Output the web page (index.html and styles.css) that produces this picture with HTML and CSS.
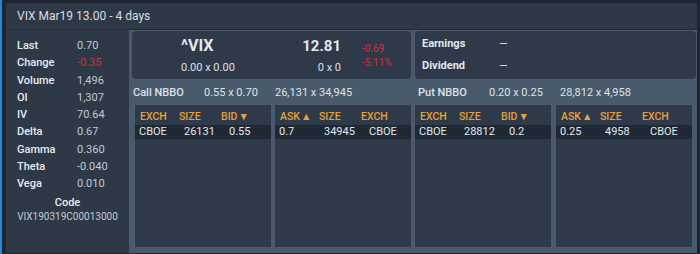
FILE: index.html
```html
<!DOCTYPE html>
<html lang="en">
<head>
  <meta charset="UTF-8">
  <title>VIX Mar19 13.00 - 4 days</title>
  <link rel="stylesheet" href="styles.css">
</head>
<body>
  <div class="panel">
    <div class="panel-title">VIX Mar19 13.00 - 4 days</div>
    <div class="panel-body">
      <aside class="stats">
        <dl class="stat-list">
          <div class="stat"><dt>Last</dt><dd>0.70</dd></div>
          <div class="stat"><dt>Change</dt><dd class="neg">-0.35</dd></div>
          <div class="stat"><dt>Volume</dt><dd>1,496</dd></div>
          <div class="stat"><dt>OI</dt><dd>1,307</dd></div>
          <div class="stat"><dt>IV</dt><dd>70.64</dd></div>
          <div class="stat"><dt>Delta</dt><dd>0.67</dd></div>
          <div class="stat"><dt>Gamma</dt><dd>0.360</dd></div>
          <div class="stat"><dt>Theta</dt><dd>-0.040</dd></div>
          <div class="stat"><dt>Vega</dt><dd>0.010</dd></div>
        </dl>
        <div class="code">
          <div class="code-label">Code</div>
          <div class="code-value">VIX190319C00013000</div>
        </div>
      </aside>

      <main class="quote">
        <div class="summary">
          <div class="card card-symbol">
            <div class="sym-col">
              <div class="sym">^VIX</div>
              <div class="sub">0.00 x 0.00</div>
            </div>
            <div class="px-col">
              <div class="price">12.81</div>
              <div class="sub">0 x 0</div>
            </div>
            <div class="chg-col neg">
              <div>-0.69</div>
              <div>-5.11%</div>
            </div>
          </div>
          <div class="card card-events">
            <div class="event"><span class="event-label">Earnings</span><span>—</span></div>
            <div class="event"><span class="event-label">Dividend</span><span>—</span></div>
          </div>
        </div>

        <div class="books">
          <section class="book book-call">
            <div class="nbbo">
              <span class="nbbo-label">Call NBBO</span>
              <span class="nbbo-cell">0.55 x 0.70</span>
              <span class="nbbo-cell">26,131 x 34,945</span>
            </div>
            <div class="book-tables">
              <div class="depth">
                <div class="depth-head"><span>EXCH</span><span>SIZE</span><span>BID<i class="arrow">▼</i></span></div>
                <div class="depth-row"><span>CBOE</span><span>26131</span><span>0.55</span></div>
              </div>
              <div class="depth">
                <div class="depth-head"><span>ASK<i class="arrow">▲</i></span><span>SIZE</span><span>EXCH</span></div>
                <div class="depth-row"><span>0.7</span><span>34945</span><span>CBOE</span></div>
              </div>
            </div>
          </section>

          <section class="book book-put">
            <div class="nbbo">
              <span class="nbbo-label">Put NBBO</span>
              <span class="nbbo-cell">0.20 x 0.25</span>
              <span class="nbbo-cell">28,812 x 4,958</span>
            </div>
            <div class="book-tables">
              <div class="depth">
                <div class="depth-head"><span>EXCH</span><span>SIZE</span><span>BID<i class="arrow">▼</i></span></div>
                <div class="depth-row"><span>CBOE</span><span>28812</span><span>0.2</span></div>
              </div>
              <div class="depth">
                <div class="depth-head"><span>ASK<i class="arrow">▲</i></span><span>SIZE</span><span>EXCH</span></div>
                <div class="depth-row"><span>0.25</span><span>4958</span><span>CBOE</span></div>
              </div>
            </div>
          </section>
        </div>
      </main>
    </div>
  </div>
</body>
</html>
```

FILE: styles.css
```css
/* Base */
* {
  box-sizing: border-box;
}
body {
  margin: 0;
  height: 254px;
  padding: 3px 3px 1px 4px;
  border-left: 2px solid #2a84d8;
  background: #1e2731;
  font-family: Roboto, 'Liberation Sans', sans-serif;
  font-size: 11px;
  color: #e4e7eb;
  overflow: hidden;
}
.panel {
  height: 100%;
  display: flex;
  flex-direction: column;
  background: #2d3947;
}
.panel-title {
  height: 27px;
  padding: 6px 0 0 11px;
  font-size: 12px;
  line-height: 15px;
  color: #d9dde2;
  border-bottom: 1px solid #222c37;
}
.panel-body {
  flex: 1;
  display: flex;
  min-height: 0;
}

/* Left stats column */
.stats {
  width: 123px;
  padding-top: 7px;
}
.stat-list {
  margin: 0;
  padding-left: 11px;
}
.stat {
  display: flex;
  line-height: 17.25px;
}
.stat dt {
  width: 60px;
  font-weight: 500;
  color: #e8ebee;
}
.stat dd {
  margin: 0;
  color: #c3c9d0;
}
.neg {
  color: #dc2a30 !important;
}
.code {
  margin-top: 4px;
  text-align: center;
}
.code-label {
  line-height: 14px;
  font-weight: 500;
  color: #e8ebee;
}
.code-value {
  line-height: 14px;
  font-size: 10px;
  color: #c3c9d0;
}

/* Main quote area */
.quote {
  flex: 1;
  background: #485a6b;
  padding: 1px 1px 6px 3px;
  display: flex;
  flex-direction: column;
}
.summary {
  display: grid;
  grid-template-columns: 279px 281px;
  gap: 4px;
  height: 48px;
}
.card {
  background: #2e3a49;
  border-radius: 4px;
}
.card-symbol {
  display: flex;
}
.sym-col {
  margin-left: 49px;
  width: 80px;
  padding-top: 5px;
}
.sym {
  font-size: 16px;
  font-weight: 700;
  line-height: 20px;
}
.sub {
  margin-top: 5px;
  line-height: 14px;
  color: #dde1e5;
}
.px-col {
  width: 80px;
  padding-top: 5px;
  text-align: right;
}
.price {
  font-size: 15px;
  font-weight: 700;
  line-height: 20px;
}
.chg-col {
  margin-left: 21px;
  padding-top: 11px;
  font-size: 10px;
  line-height: 14px;
}
.card-events {
  padding: 2px 0 0 7px;
}
.event {
  display: flex;
  line-height: 22px;
}
.event-label {
  width: 77px;
  font-weight: 700;
}

/* Order books */
.books {
  flex: 1;
  display: grid;
  grid-template-columns: 276px 277px;
  gap: 4px;
  padding-left: 3px;
}
.book {
  display: flex;
  flex-direction: column;
}
.nbbo {
  height: 26px;
  display: flex;
  align-items: center;
  white-space: nowrap;
  color: #dfe3e7;
}
.book-call .nbbo {
  margin-left: -2px;
}
.book-put .nbbo {
  margin-left: 3px;
}
.nbbo-label {
  width: 71px;
  font-weight: 500;
}
.nbbo-cell {
  width: 71px;
}
.nbbo-cell:last-child {
  width: auto;
}
.book-tables {
  flex: 1;
  display: grid;
  grid-template-columns: 1fr 1fr;
  gap: 4px;
}
.book-put .book-tables {
  gap: 5px;
}
.depth {
  background: #2e3a49;
}
.depth-head,
.depth-row {
  display: grid;
  grid-template-columns: 40px 42px 1fr;
}
.depth-head {
  height: 20px;
  padding-top: 4px;
  line-height: 16px;
  font-size: 10.5px;
  font-weight: 500;
  color: #e3a23b;
}
.depth-head span {
  padding-left: 4px;
}
.depth-head span:first-child {
  padding-left: 5px;
}
.arrow {
  font-style: normal;
  font-size: 10.5px;
  margin-left: 1px;
}
.depth-row {
  height: 14px;
  line-height: 14px;
  background: #1f2934;
  color: #e4e7eb;
}
.depth-row span:nth-child(1) {
  padding-left: 4px;
}
.depth-row span:nth-child(2) {
  padding-left: 9px;
}
.depth-row span:nth-child(3) {
  padding-left: 12px;
}
```
